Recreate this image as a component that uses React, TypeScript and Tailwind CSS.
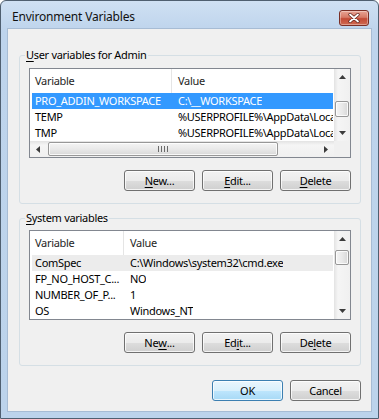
import type { ReactNode } from "react";

type Row = { name: string; value: string; state?: "selected" | "inactive" };

const userRows: Row[] = [
  { name: "PRO_ADDIN_WORKSPACE", value: "C:\\__WORKSPACE", state: "selected" },
  { name: "TEMP", value: "%USERPROFILE%\\AppData\\Loca" },
  { name: "TMP", value: "%USERPROFILE%\\AppData\\Loca" },
];

const systemRows: Row[] = [
  { name: "ComSpec", value: "C:\\Windows\\system32\\cmd.exe", state: "inactive" },
  { name: "FP_NO_HOST_C...", value: "NO" },
  { name: "NUMBER_OF_P...", value: "1" },
  { name: "OS", value: "Windows_NT" },
];

function Arrow({ dir }: { dir: "up" | "down" | "left" | "right" }) {
  const pts = {
    up: "0,4 3.5,0 7,4",
    down: "0,0 3.5,4 7,0",
    left: "4,0 0,3.5 4,7",
    right: "0,0 4,3.5 0,7",
  }[dir];
  const vert = dir === "up" || dir === "down";
  return (
    <svg width={vert ? 7 : 4} height={vert ? 4 : 7} viewBox={vert ? "0 0 7 4" : "0 0 4 7"}>
      <polygon points={pts} fill="#3b3b3b" />
    </svg>
  );
}

function VScroll({ thumbTop, thumbH }: { thumbTop: number; thumbH: number }) {
  return (
    <div className="w-[16px] shrink-0 flex flex-col bg-[linear-gradient(to_right,#e3e3e3,#f5f5f5_25%,#f0f0f0)]">
      <div className="h-[16px] flex items-center justify-center">
        <Arrow dir="up" />
      </div>
      <div className="flex-1">
        <div
          className="mx-[1px] rounded-[2px] border border-[#979797] bg-[linear-gradient(to_right,#f4f4f4,#e9e9e9_50%,#d8d8d8)] shadow-[inset_0_0_0_1px_rgba(255,255,255,0.8)]"
          style={{ marginTop: thumbTop, height: thumbH }}
        />
      </div>
      <div className="h-[16px] flex items-center justify-center">
        <Arrow dir="down" />
      </div>
    </div>
  );
}

function HScroll() {
  return (
    <div className="h-[16px] flex bg-[linear-gradient(to_bottom,#e3e3e3,#f5f5f5_25%,#f0f0f0)]">
      <div className="w-[16px] flex items-center justify-center">
        <Arrow dir="left" />
      </div>
      <div className="flex-1 flex items-stretch py-[1px]">
        <div className="ml-[2px] w-[230px] rounded-[2px] border border-[#979797] bg-[linear-gradient(to_bottom,#f4f4f4,#e9e9e9_50%,#d8d8d8)] shadow-[inset_0_0_0_1px_rgba(255,255,255,0.8)] flex items-center justify-center gap-[2px]">
          <div className="w-[1px] h-[6px] bg-[#6a6a6a]" />
          <div className="w-[1px] h-[6px] bg-[#6a6a6a]" />
          <div className="w-[1px] h-[6px] bg-[#6a6a6a]" />
          <div className="w-[1px] h-[6px] bg-[#6a6a6a]" />
        </div>
      </div>
      <div className="w-[16px] flex items-center justify-center">
        <Arrow dir="right" />
      </div>
    </div>
  );
}

function ListView({
  rows,
  colW,
  hscroll,
  thumbTop,
  thumbH,
}: {
  rows: Row[];
  colW: number;
  hscroll?: boolean;
  thumbTop: number;
  thumbH: number;
}) {
  return (
    <div className="h-[90px] w-full overflow-hidden border border-[#828790] bg-white flex flex-col">
      <div className="flex-1 min-h-0 flex">
        <div className="flex-1 min-w-0 flex flex-col overflow-hidden">
          <div className="h-[24px] flex shrink-0 text-[#1e1e1e]">
            <div className="shrink-0 border-r border-[#e5e5e5] pl-[5px] flex items-center" style={{ width: colW }}>
              Variable
            </div>
            <div className="pl-[6px] flex items-center">Value</div>
          </div>
          {rows.map((r) => (
            <div
              key={r.name}
              className={`h-[16px] shrink-0 ml-[2px] mr-[1px] flex items-center whitespace-nowrap overflow-hidden ${
                r.state === "selected"
                  ? "bg-[#3399ff] text-white"
                  : r.state === "inactive"
                  ? "bg-[#ececec] text-black"
                  : "text-black"
              }`}
            >
              <div className="pl-[3px] shrink-0 overflow-hidden" style={{ width: colW - 2 }}>
                {r.name}
              </div>
              <div className="pl-[6px] min-w-0 overflow-hidden">{r.value}</div>
            </div>
          ))}
        </div>
        <VScroll thumbTop={thumbTop} thumbH={thumbH} />
      </div>
      {hscroll && (
        <div className="flex shrink-0">
          <div className="flex-1 min-w-0">
            <HScroll />
          </div>
          <div className="w-[16px] h-[16px] bg-[#f0f0f0]" />
        </div>
      )}
    </div>
  );
}

function Btn({ children, primary }: { children: ReactNode; primary?: boolean }) {
  return (
    <button
      className={`w-[71px] h-[21px] rounded-[3px] border leading-none text-black flex items-center justify-center shadow-[inset_0_0_0_1px_rgba(255,255,255,0.75)] ${
        primary
          ? "border-[#3c7fb1] bg-[linear-gradient(to_bottom,#eaf6fd_0%,#d9f0fc_50%,#bee6fd_51%,#a7d9f5_100%)]"
          : "border-[#707070] bg-[linear-gradient(to_bottom,#f2f2f2_0%,#ebebeb_50%,#dddddd_51%,#cfcfcf_100%)]"
      }`}
    >
      {children}
    </button>
  );
}

function U({ children }: { children: ReactNode }) {
  return <span className="underline underline-offset-[2px]">{children}</span>;
}

function Group({ label, children }: { label: ReactNode; children: ReactNode }) {
  return (
    <fieldset className="min-w-0 border border-[#d5dfe5] rounded-[3px]">
      <legend className="ml-[5px] px-[1px] leading-[16px] text-black">{label}</legend>
      <div className="px-[9px] pb-[12px]">{children}</div>
    </fieldset>
  );
}

export default function App() {
  return (
    <div className="w-[379px] h-[419px] bg-white font-['Noto_Sans','Open_Sans',sans-serif] text-[11px] tracking-[-0.3px]">
      <div className="w-[379px] h-[419px] rounded-t-[6px] border border-[#4f5f70] bg-[linear-gradient(to_bottom,#cfe0f3,#bed4ec_30px,#bcd3eb)] flex flex-col">
        {/* title bar */}
        <div className="h-[28px] shrink-0 flex items-start justify-between">
          <div className="pl-[11px] pt-[8px] leading-[16px] text-[12px] tracking-[-0.2px] text-[#111]">
            Environment Variables
          </div>
          <div className="mt-[9px] mr-[9px] w-[30px] h-[16px] rounded-[3px] border border-[#7a2e25] bg-[linear-gradient(to_bottom,#e8a394,#d77a67_45%,#c24a35_55%,#cf6a52)] shadow-[inset_0_0_0_1px_rgba(255,255,255,0.35)] flex items-center justify-center">
            <svg width="12" height="10" viewBox="0 0 12 10">
              <path d="M2 1.5 L10 8.5 M10 1.5 L2 8.5" stroke="#5a1f18" strokeWidth="3.2" strokeLinecap="round" />
              <path d="M2 1.5 L10 8.5 M10 1.5 L2 8.5" stroke="#ffffff" strokeWidth="1.8" strokeLinecap="round" />
            </svg>
          </div>
        </div>

        {/* client area */}
        <div className="flex-1 min-h-0 mx-[7px] mb-[7px] bg-[#f0f0f0] shadow-[0_0_0_1px_#a7bcd4] pt-[18px] pl-[11px] pr-[10px] flex flex-col">
          <Group
            label={
              <>
                <U>U</U>ser variables for Admin
              </>
            }
          >
            <div className="pt-[5px]">
              <ListView rows={userRows} colW={142} hscroll thumbTop={16} thumbH={16} />
            </div>
            <div className="mt-[12px] flex justify-end gap-[7px]">
              <Btn>
                <U>N</U>ew...
              </Btn>
              <Btn>
                <U>E</U>dit...
              </Btn>
              <Btn>
                <U>D</U>elete
              </Btn>
            </div>
          </Group>

          <div className="mt-[6px]">
            <Group
              label={
                <>
                  <U>S</U>ystem variables
                </>
              }
            >
              <div className="pt-[4px]">
                <ListView rows={systemRows} colW={94} thumbTop={3} thumbH={15} />
              </div>
              <div className="mt-[12px] flex justify-end gap-[7px]">
                <Btn>
                  Ne<U>w</U>...
                </Btn>
                <Btn>
                  Ed<U>i</U>t...
                </Btn>
                <Btn>
                  De<U>l</U>ete
                </Btn>
              </div>
            </Group>
          </div>

          <div className="mt-[14px] flex justify-end gap-[7px]">
            <Btn primary>OK</Btn>
            <Btn>Cancel</Btn>
          </div>
        </div>
      </div>
    </div>
  );
}
